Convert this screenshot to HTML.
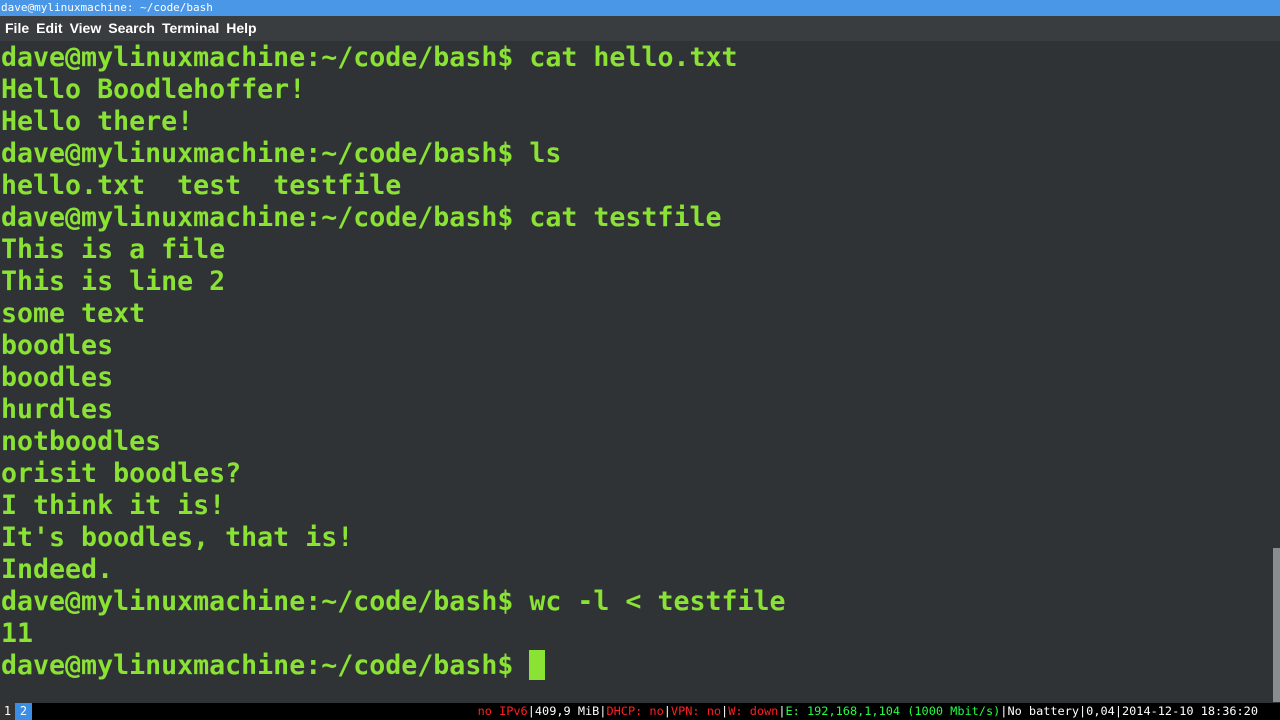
<!DOCTYPE html>
<html><head><style>
body{margin:0;width:1280px;height:720px;overflow:hidden;background:#2f3335;font-family:"Liberation Sans",sans-serif;position:relative}
#title{position:absolute;top:0;left:0;width:1280px;height:16px;background:#4a97e8;color:#fff;font:11px "DejaVu Sans Mono",monospace;line-height:16px;padding-left:1px}
#menu{position:absolute;top:16px;left:0;width:1280px;height:25px;background:#3a3d3f;color:#fff;font:bold 14px "Liberation Sans",sans-serif;line-height:25px}
#menu span{margin-left:5px;margin-right:2px}
#term{position:absolute;top:42px;left:1px;font:bold 26.6px "DejaVu Sans Mono",monospace;line-height:32px;color:#8ae234;white-space:pre}
#cur{display:inline-block;width:16px;height:30px;background:#8ae234;vertical-align:-6px}
#sb{position:absolute;right:0;top:548px;width:7px;height:154px;background:#8a8d8f}
#bar{position:absolute;left:0;bottom:0;width:1280px;height:17px;background:#000;font:12px "DejaVu Sans Mono",monospace;line-height:17px;color:#fff}
.r{color:#ff2020}.g{color:#20ff40}
</style></head><body>
<div id="title">dave@mylinuxmachine: ~/code/bash</div>
<div id="menu"><span>File</span><span>Edit</span><span>View</span><span>Search</span><span>Terminal</span><span>Help</span></div>
<div id="term">dave@mylinuxmachine:~/code/bash$ cat hello.txt
Hello Boodlehoffer!
Hello there!
dave@mylinuxmachine:~/code/bash$ ls
hello.txt  <b>test</b>  testfile
dave@mylinuxmachine:~/code/bash$ cat testfile
This is a file
This is line 2
some text
boodles
boodles
hurdles
notboodles
orisit boodles?
I think it is!
It's boodles, that is!
Indeed.
dave@mylinuxmachine:~/code/bash$ wc -l &lt; testfile
11
dave@mylinuxmachine:~/code/bash$ <span id="cur"></span></div>
<div id="sb"></div>
<div id="bar"><span style="display:inline-block;width:15px;background:#333;text-align:center">1</span><span style="display:inline-block;width:17px;background:#3a8ee6;text-align:center">2</span>
<span style="position:absolute;right:22px;top:0;font-size:11.9px"><span class="r">no IPv6</span>|409,9 MiB|<span class="r">DHCP: no</span>|<span class="r">VPN: no</span>|<span class="r">W: down</span>|<span class="g">E: 192,168,1,104 (1000 Mbit/s)</span>|No battery|0,04|2014-12-10 18:36:20</span></div>
</body></html>
